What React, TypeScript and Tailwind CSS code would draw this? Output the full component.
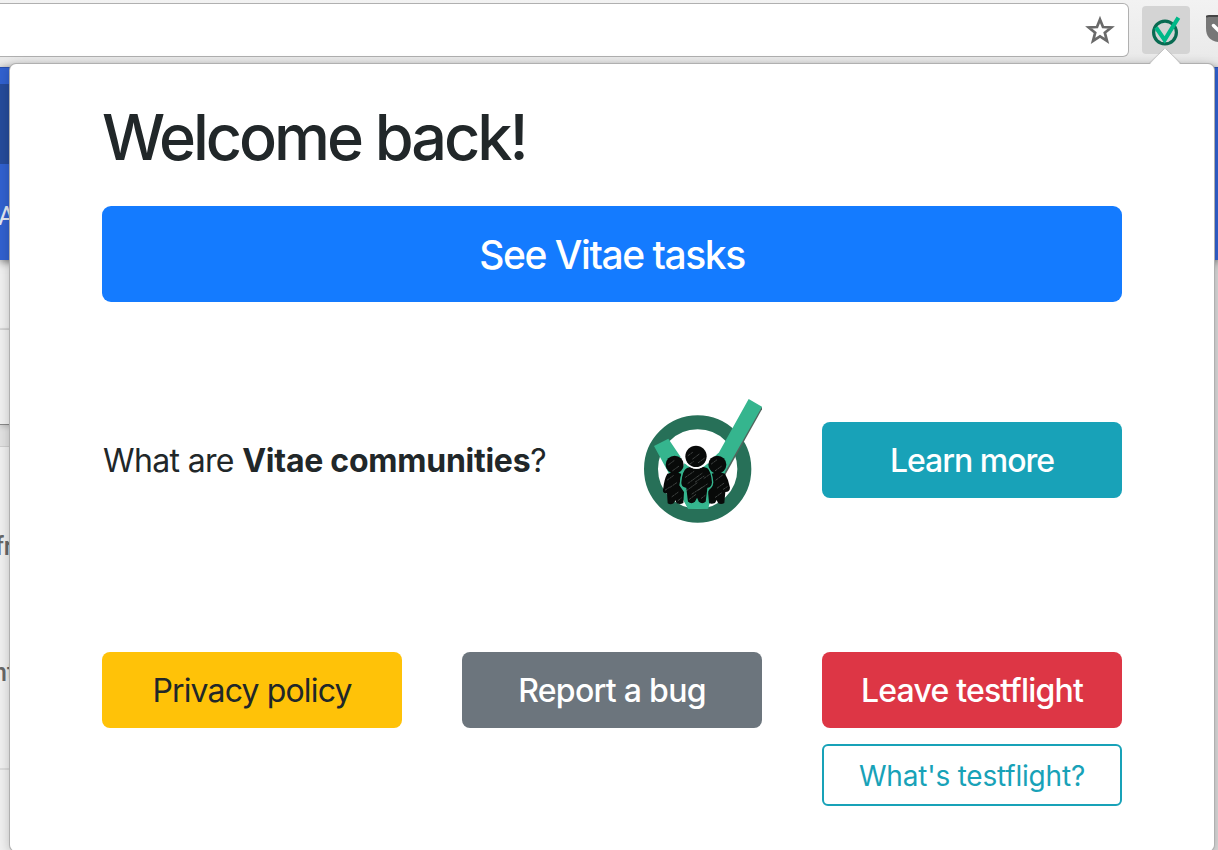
import type { ReactNode } from "react";

const scratches = [
  "M174 197l14-10M188 207l20-15M205 218l18-13M180 222l10-7",
  "M166 262l26-18M174 280l42-30M196 276l28-19M168 303l34-25M186 312l30-20M206 300l26-18M178 328l20-15M214 325l12-9M222 265l16-11",
  "M116 224l16-12M128 242l18-13M112 270l18-13M120 292l22-15M106 300l12-8M126 320l18-13M144 332l10-8",
  "M244 222l16-12M256 242l18-13M258 270l20-15M262 294l22-16M256 322l18-13M280 298l12-8",
];

function CommunityLogo() {
  return (
    <svg width="120" height="125" viewBox="36 24 360 375" fill="none" className="shrink-0">
      <circle cx="203" cy="237" r="140" stroke="#277058" strokeWidth="42" />
      <path d="M394 51l4 3-112 200-20 30-8-10z" fill="#50645c" />
      <path d="M72 168l43-22 37 55 44 60 70-72 90-162 40 23-116 205-48 101h-58l-25-46z" fill="#35b58e" />
      <path d="M152 201l14 14-8 17h78l10-22 20-21-30 70-60 30-42-60z" fill="#fff" />
      <path d="M152 236q20-24 51-24t50 24l6 35-16 30-8 55h-60l-25-46-14-39z" fill="#35b58e" />
      <path d="M240 212l26-24 20 62-30 6z" fill="#35b58e" />
      <g fill="#080a09">
        <circle cx="134" cy="224" r="27" />
        <path d="M112 251q22-7 42 0l-6 35 14 20-2 33q-10 6-20 1l-4-9-5 9q-10 6-18 0l-2-30q-17 1-11-17 3-27 12-42z" />
        <circle cx="262" cy="224" r="27" />
        <path d="M245 251q22-9 40 0 11 18 15 42-1 13-14 13l-3 33q-10 6-19 0l-4-9-5 9q-11 5-18 0l-3-35 13-16z" />
      </g>
      <path
        d="M170 232q31-12 62 0 13 10 16 45-2 18-14 18l-5 41q-12 11-24 1l-4-9-5 9q-12 10-24-1l-5-41q-16-1-15-18 3-37 18-45z"
        fill="#080a09"
        stroke="#35b58e"
        strokeWidth="4"
      />
      <circle cx="199" cy="199" r="37" fill="#fff" />
      <path d="M166 216q33 32 66 0" stroke="#fff" strokeWidth="8" />
      <circle cx="198" cy="199" r="32" fill="#080a09" />
      {scratches.map((d) => (
        <path key={d} d={d} stroke="#747b78" strokeWidth="1.5" strokeLinecap="round" strokeDasharray="7 4 3 3" />
      ))}
    </svg>
  );
}

function Toolbar() {
  return (
    <header className="flex h-[67px] shrink-0 bg-linear-to-b from-[#f2f2f2] to-[#e9e9e9]">
      <div className="mt-[3px] flex h-[54px] w-[1129px] shrink-0 items-center justify-end rounded-r-[6px] border-y border-r border-[#b0b0b0] bg-white pr-[13px]">
        <svg width="30" height="30" viewBox="0 0 30 30" fill="none" className="shrink-0">
          <path d="M15 4.500l3 7.500 8.300.500-6.500 5.200 2.200 8.200-7-4.500-7 4.500 2.200-8.200-6.500-5.200 8.300-.500z" stroke="#6a6a6a" strokeWidth="2.700" />
        </svg>
      </div>
      <div className="mt-[6px] ml-[13px] h-[48px] w-[48px] shrink-0 rounded-[4px] bg-[#d4d4d4]">
        <svg width="48" height="48" viewBox="0 0 48 48" fill="none">
          <circle cx="23" cy="26.500" r="11.400" stroke="#096b52" strokeWidth="3.200" />
          <path d="M14 21.500l8.600 12.500L36.400 11.600" stroke="#00b888" strokeWidth="4.200" />
        </svg>
      </div>
      <svg width="12" height="32" viewBox="0 0 12 32" fill="none" className="mt-[14px] ml-[16px] shrink-0">
        <path d="M0 4q0-2 3-2h20v14q0 12-10 12Q0 27 0 14z" fill="#777" />
        <path d="M0 3q1-1 3-1h9" stroke="#444" strokeWidth="2" />
        <path d="M7.500 11.500l7 7" stroke="#fff" strokeWidth="3.500" strokeLinecap="round" />
      </svg>
    </header>
  );
}

function PageBehind() {
  return (
    <div className="flex grow flex-col bg-[#dadada] font-['Roboto',sans-serif]">
      <div className="relative z-10 h-[193px] shrink-0 border-t border-[#284fae] bg-[#3161cf] pt-[16px] shadow-[0_2px_8px_rgba(0,0,0,0.5)]">
        <div className="h-[80px] w-[10px] bg-[#264b9a]" />
        <div className="mt-[37px] -ml-[2px] text-[26px] leading-[30px] text-[#e4e9f2]">A</div>
      </div>
      <div className="flex w-[1200px] grow flex-col bg-[#f0f0f0]">
        <div className="h-[70px] shrink-0 border-b-2 border-[#dcdcdc]" />
        <div className="h-[95px] shrink-0 border-b border-[#888] shadow-[0_2px_5px_rgba(0,0,0,0.35)]" />
        <div className="h-[22px] shrink-0 border-b border-[#cfcfcf] bg-[#d9d9d9]/60" />
        <div className="h-[323px] shrink-0 border-b-2 border-[#dcdcdc] pt-[84px] text-[25px] leading-[32px] text-[#686868]">
          <div className="-ml-[5px] font-medium">fr</div>
          <div className="mt-[94px] -ml-[7px] font-medium">nt</div>
        </div>
      </div>
    </div>
  );
}

function ActionButton({ className, children }: { className: string; children: ReactNode }) {
  return (
    <button className={`flex h-[76px] w-[300px] shrink-0 items-center justify-center rounded-[8px] pt-px text-[32px] whitespace-nowrap ${className}`}>
      {children}
    </button>
  );
}

function Popup() {
  return (
    <main className="absolute top-[64px] left-[10px] z-20 h-[787px] w-[1204px] rounded-[6px] bg-white px-[92px] pt-[34px] font-['Inter',sans-serif] text-[#212729] shadow-[0_0_0_1px_#b0b0b0,0_2px_12px_rgba(0,0,0,0.25)]">
      <svg width="32" height="17" viewBox="0 0 32 17" className="absolute -top-[16px] left-[1139px]">
        <path d="M0 17L16 0l16 17z" fill="#fff" />
        <path d="M0 15.500L15.500.5M16.500.5L32 15.500" stroke="#b9b9b9" strokeWidth="0.800" />
      </svg>
      <h1 className="h-[76px] pt-px text-[63px] leading-[76px] font-medium tracking-[-3.050px] whitespace-nowrap">Welcome back!</h1>
      <button className="mt-[32px] flex h-[96px] w-full items-center justify-center rounded-[9px] bg-[#147bff] pt-[2px] text-[39px] font-[450] tracking-[-1.450px] text-white">
        See Vitae tasks
      </button>
      <section className="mt-[95px] flex h-[126px] items-center">
        <p className="w-[540px] pt-[2px] pl-px text-[32px] tracking-[-0.650px] whitespace-nowrap">
          What are <strong className="font-bold tracking-[-0.250px]">Vitae communities</strong>?
        </p>
        <CommunityLogo />
        <ActionButton className="ml-[60px] bg-[#18a2b8] font-[450] tracking-[-1px] text-white">Learn more</ActionButton>
      </section>
      <section className="mt-[129px] flex gap-[60px]">
        <ActionButton className="bg-[#ffc208] font-normal tracking-[-0.850px] text-[#212729]">Privacy policy</ActionButton>
        <ActionButton className="bg-[#6c757d] font-[450] tracking-[-0.700px] text-white">Report a bug</ActionButton>
        <div className="flex flex-col gap-[16px]">
          <ActionButton className="bg-[#dd3645] font-[450] tracking-[-0.800px] text-white">Leave testflight</ActionButton>
          <button className="flex h-[62px] items-center justify-center rounded-[6px] border-2 border-[#18a2b8] pt-[2px] text-[28px] font-normal tracking-[-0.200px] text-[#18a2b8]">
            What's testflight?
          </button>
        </div>
      </section>
    </main>
  );
}

export default function App() {
  return (
    <div className="relative flex h-[850px] w-[1218px] flex-col overflow-hidden bg-[#ededed]">
      <Toolbar />
      <PageBehind />
      <Popup />
    </div>
  );
}
